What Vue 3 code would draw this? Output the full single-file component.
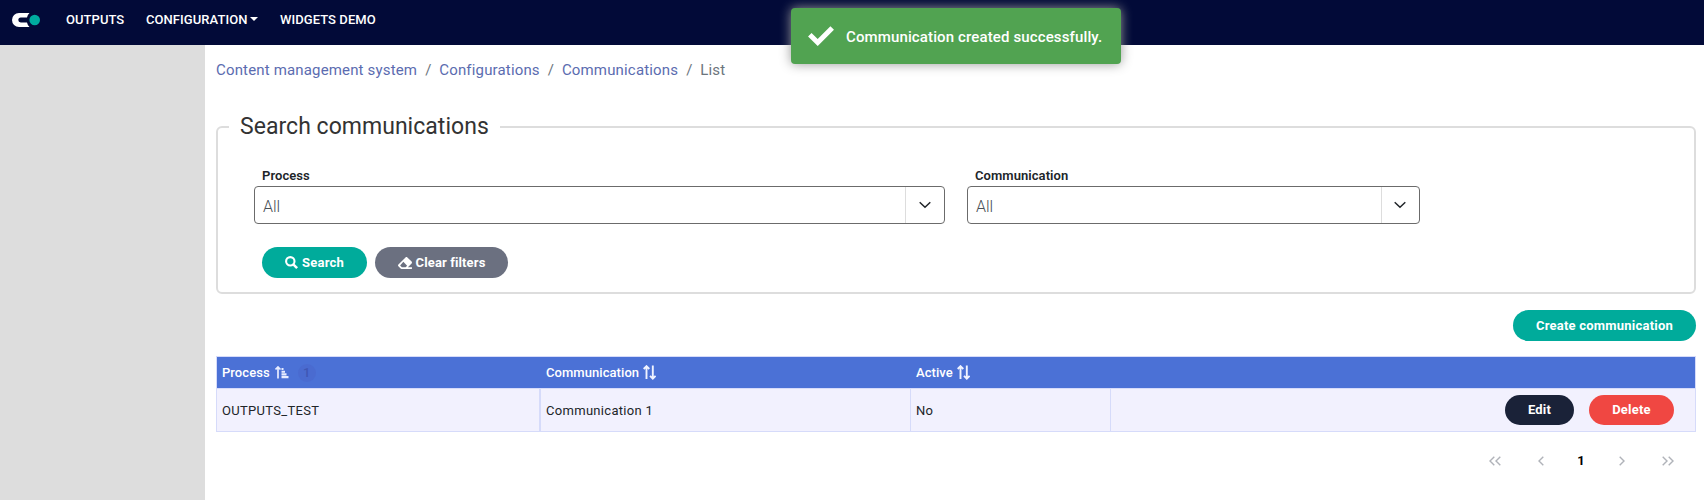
<script setup>
const crumbs = ['Content management system', 'Configurations', 'Communications']
const fields = [
  { label: 'Process', value: 'All', size: 'wide' },
  { label: 'Communication', value: 'All', size: 'narrow' },
]
</script>

<template>
  <div class="page">
    <header class="navbar">
      <svg class="logo" width="28" height="14" viewBox="0 0 28 14">
        <path d="M17.500 0H7a7 7 0 0 0 0 14h10.500a8 8 0 0 1-2.500-4.500H8.800a2.500 2.500 0 0 1 0-5h6.200a8 8 0 0 1 2.500-4.500z" fill="#fff" />
        <circle cx="22.700" cy="7" r="5.300" fill="#00ab9f" />
      </svg>
      <nav class="nav">
        <a class="nav-outputs">OUTPUTS</a>
        <a class="nav-config">CONFIGURATION<i class="caret"></i></a>
        <a>WIDGETS DEMO</a>
      </nav>
    </header>

    <div class="toast">
      <svg width="26" height="20" viewBox="0 0 26 20">
        <path d="M1.800 8.800l7.900 7.700L24.200 2" fill="none" stroke="#fff" stroke-width="5" />
      </svg>
      <span>Communication created successfully.</span>
    </div>

    <div class="body">
      <aside class="sidebar"></aside>
      <main class="content">
        <div class="crumbs">
          <template v-for="c in crumbs" :key="c"><a>{{ c }}</a><span class="sep">/</span></template>
          <span>List</span>
        </div>

        <fieldset class="panel">
          <legend>Search communications</legend>
          <div class="fields">
            <div v-for="f in fields" :key="f.label" class="field" :class="f.size">
              <label>{{ f.label }}</label>
              <div class="select">
                <span class="value">{{ f.value }}</span>
                <span class="arrow">
                  <svg width="12" height="8" viewBox="0 0 12 8"><path d="M.7 1.200L6 6.300l5.300-5.100" fill="none" stroke="#212529" stroke-width="1.500" /></svg>
                </span>
              </div>
            </div>
          </div>
          <div class="actions">
            <button class="btn teal search">
              <svg width="13" height="13" viewBox="0 0 13 13"><circle cx="5.300" cy="5.300" r="4.200" fill="none" stroke="#fff" stroke-width="2.100" /><path d="M8.300 8.300l3.800 3.800" stroke="#fff" stroke-width="2.500" /></svg>
              <span>Search</span>
            </button>
            <button class="btn gray clear">
              <svg width="14" height="12" viewBox="0 0 512 440"><path fill="#fff" d="M498 237c19-19 19-49 0-68L343 14c-19-19-49-19-68 0L14 275c-19 19-19 49 0 68l80 80c9 9 21 14 34 14h372c7 0 12-5 12-12v-40c0-7-5-12-12-12H362l136-136zM195 177l140 140-56 56H141l-64-64 118-132z" /></svg>
              <span>Clear filters</span>
            </button>
          </div>
        </fieldset>

        <div class="create-row"><button class="btn teal create">Create communication</button></div>

        <div class="table">
          <div class="row head">
            <div class="c1">Process
              <svg class="sorted" width="14" height="13" viewBox="0 0 14 13"><path d="M3 12.500V1M.5 3.500L3 1l2.500 2.500" fill="none" stroke="#e8edff" stroke-width="1.700" /><path d="M6.500 3h2M6.500 5.700h3.500M6.500 8.400h5M6.500 11.100h7" stroke="#e8edff" stroke-width="2.100" /></svg>
              <span class="badge">1</span>
            </div>
            <div class="c2">Communication
              <svg class="sort" width="13" height="15" viewBox="0 0 13 15"><path d="M3.500 14V1.300M.7 4l2.800-2.800L6.300 4M9.800 .5v13M7 10.800l2.800 2.800 2.800-2.800" fill="none" stroke="#f0f3ff" stroke-width="1.900" /></svg>
            </div>
            <div class="c3">Active
              <svg class="sort" width="13" height="15" viewBox="0 0 13 15"><path d="M3.500 14V1.300M.7 4l2.800-2.800L6.300 4M9.800 .5v13M7 10.800l2.800 2.800 2.800-2.800" fill="none" stroke="#f0f3ff" stroke-width="1.900" /></svg>
            </div>
            <div class="c4"></div>
          </div>
          <div class="row data">
            <div class="c1">OUTPUTS_TEST</div>
            <div class="c2">Communication 1</div>
            <div class="c3">No</div>
            <div class="c4">
              <button class="btn dark">Edit</button>
              <button class="btn red">Delete</button>
            </div>
          </div>
        </div>

        <div class="pager">
          <svg width="12" height="10" viewBox="0 0 12 10"><path d="M5.300 .8L1 5l4.300 4.200M11.300 .8L7 5l4.300 4.200" /></svg>
          <svg width="6" height="10" viewBox="0 0 6 10"><path d="M5.300 .8L1 5l4.300 4.200" /></svg>
          <b>1</b>
          <svg width="6" height="10" viewBox="0 0 6 10"><path d="M.7 .8L5 5 .7 9.200" /></svg>
          <svg width="12" height="10" viewBox="0 0 12 10"><path d="M.7 .8L5 5 .7 9.200M6.700 .8L11 5 6.700 9.200" /></svg>
        </div>
      </main>
    </div>
  </div>
</template>

<style>
body { margin: 0; overflow: hidden; }
</style>

<style scoped>
* { box-sizing: border-box; }
.page { height: 500px; display: flex; flex-direction: column; font-family: Roboto, sans-serif; background: #fff; color: #212529; overflow: hidden; }
.navbar { height: 45px; flex: none; background: #020a38; display: flex; padding: 13px 0 0 12px; }
.logo { flex: none; }
.nav { display: flex; margin: -4px 0 0 26px; font-size: 13px; line-height: 21px; height: 21px; font-weight: 500; color: #fff; white-space: nowrap; letter-spacing: .06px; }
.nav-outputs { width: 80px; }
.nav-config { width: 134px; }
.caret { display: inline-block; margin-left: 3px; vertical-align: 3px; border: 4px solid transparent; border-top-color: #fff; border-bottom: 0; }
.toast { position: absolute; left: 791px; top: 8px; width: 330px; height: 56px; background: #51a351; border-radius: 4px; box-shadow: 0 0 12px #999; display: flex; align-items: center; padding-left: 17px; gap: 12px; color: #fff; font-size: 15px; font-weight: 500; letter-spacing: .13px; white-space: nowrap; }
.toast span { padding-top: 2px; }
.body { flex: 1; display: flex; min-height: 0; }
.sidebar { width: 205px; background: #ddd; flex: none; }
.content { flex: 1; min-width: 0; padding: 13px 8px 0 11px; }
.crumbs { display: flex; height: 24px; line-height: 24px; font-size: 15px; letter-spacing: .16px; color: #6c757d; }
.crumbs a { color: #5b6cb0; }
.sep { padding: 0 7.8px 0 8px; }
.panel { margin: 30px 0 0; padding: 0 0 0 36px; height: 182px; min-width: 0; border: 2px solid #ddd; border-radius: 6px; }
legend { margin-left: -25px; padding: 0 11px; width: 271px; height: 29px; line-height: 29px; font-size: 23px; letter-spacing: .03px; color: #333; white-space: nowrap; }
.fields { display: flex; gap: 22px; padding-top: 25px; }
.wide { width: 691px; }
.narrow { width: 453px; }
label { display: block; padding-left: 8px; font-size: 13px; line-height: 20px; height: 20px; font-weight: 600; letter-spacing: .06px; }
.select { height: 38px; border: 1px solid #6b6b6b; border-radius: 4px; display: flex; }
.value { flex: 1; padding: 2px 0 0 8px; font-size: 16px; line-height: 36px; font-weight: 300; color: #495057; }
.arrow { width: 39px; border-left: 1px solid #ddd; display: flex; align-items: center; justify-content: center; }
.narrow .arrow { width: 38px; padding-right: 1px; }
.actions { display: flex; gap: 8px; margin: 23px 0 0 8px; }
.btn { font: bold 13px/20px Roboto, sans-serif; letter-spacing: .22px; border: 0; border-radius: 16px; height: 31px; padding: 0; color: #fff; display: flex; align-items: center; justify-content: center; gap: 4px; white-space: nowrap; }
.teal { background: #00ab9b; }
.gray { background: #6b7080; }
.search { width: 105px; }
.clear { width: 133px; letter-spacing: .12px; }
.create-row { display: flex; justify-content: flex-end; margin-top: 16px; }
.create { width: 183px; }
.table { margin-top: 15px; border: 1px solid #d6dbfa; font-size: 13px; }
.row { display: flex; }
.row > div { padding-left: 5px; display: flex; align-items: center; white-space: nowrap; }
.head { height: 31px; background: #4b71d6; color: #fff; font-weight: 500; letter-spacing: .06px; }
.data { height: 43px; background: #f2f1fe; border-top: 1px solid #d6dbfa; letter-spacing: .3px; }
.c1 { width: 324px; }
.c2 { width: 370px; }
.c3 { width: 200px; }
.c4 { flex: 1; }
.data .c1 { border-right: 2px solid #d6dbfa; }
.data .c2, .data .c3 { border-right: 1px solid #d6dbfa; }
.data .c4 { justify-content: flex-end; gap: 15px; padding-right: 21px; }
.sorted { margin-left: 5px; }
.sort { margin-left: 4px; }
.badge { width: 18px; height: 18px; border-radius: 9px; margin-left: 9px; background: #4a6bd0; color: #3f57b5; text-align: center; line-height: 18px; }
.dark { width: 69px; height: 30px; background: #1a2238; }
.red { width: 85px; height: 30px; background: #f04742; }
.pager { display: flex; align-items: center; justify-content: flex-end; margin-top: 19px; padding-right: 22px; height: 20px; font-size: 13px; line-height: 20px; }
.pager svg { fill: none; stroke: #b0b3b9; stroke-width: 1.400; }
.pager svg:nth-child(2) { margin-left: 37px; }
.pager b { margin: 0 34px 0 33px; width: 8px; text-align: center; color: #000; }
.pager svg:last-child { margin-left: 37px; }
</style>
